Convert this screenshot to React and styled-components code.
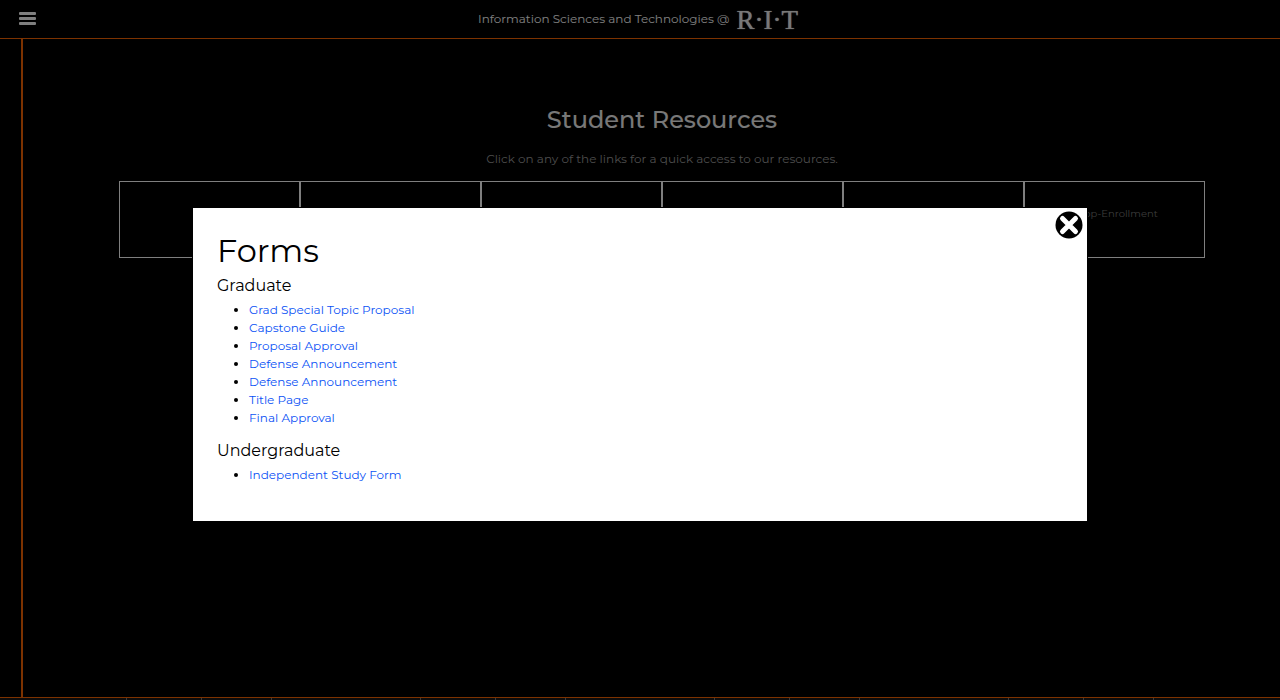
import React from "react";
import styled, { createGlobalStyle } from "styled-components";

const GlobalStyle = createGlobalStyle`
  *, *::before, *::after { box-sizing: border-box; }
  body {
    margin: 0;
    background: #000;
    color: #fff;
    font-family: Montserrat, Inter, "Liberation Sans", sans-serif;
    font-size: 12px;
    line-height: 18px;
  }
`;

const accent = "#fa6400";

const Page = styled.div`
  min-height: 100vh;
  display: flex;
  flex-direction: column;
`;

const Header = styled.header`
  display: grid;
  grid-template-columns: 1fr auto 1fr;
  align-items: center;
  height: 39px;
  padding: 0 23px 0 19px;
  border-bottom: 1px solid ${accent};
`;

const MenuButton = styled.button`
  justify-self: start;
  display: flex;
  padding: 0;
  border: 0;
  background: none;
  color: #fff;
`;

const Brand = styled.a`
  display: flex;
  align-items: center;
  gap: 7px;
  color: #fff;
  text-decoration: none;
`;

const Logo = styled.span`
  padding-top: 2px;
  font-family: "Liberation Serif", serif;
  font-size: 27px;
  line-height: 36px;
  color: #f0f0f0;
  text-shadow: 0 0 1px #fff;
`;

const Body = styled.div`
  flex: 1;
  display: flex;
  border-bottom: 1px solid ${accent};
`;

const Rail = styled.div`
  width: 23px;
  border-right: 2px solid ${accent};
`;

const Main = styled.main`
  flex: 1;
  padding: 65px 75px 64px 96px;
  text-align: center;
`;

const Title = styled.h1`
  margin: 0 0 14px;
  font-size: 24px;
  font-weight: 500;
  line-height: 32px;
  color: #f0f0f0;
`;

const Intro = styled.p`
  margin: 0 0 13px;
  color: #999;
`;

const Resources = styled.div`
  display: grid;
  grid-template-columns: repeat(6, 1fr);
`;

const Resource = styled.button`
  height: 77px;
  padding: 0 0 12px;
  border: 1px solid #fff;
  background: #000;
  color: #777;
  font: inherit;
  font-size: 10px;
`;

const FooterEdge = styled.footer`
  height: 2px;
  background: repeating-linear-gradient(
    90deg,
    #181818 0 126px, #777 126px 127px,
    #181818 127px 201px, #777 201px 202px,
    #181818 202px 271px, #777 271px 272px,
    #181818 272px 294px
  );
`;

const Overlay = styled.div`
  position: fixed;
  inset: 0;
  display: flex;
  align-items: flex-start;
  justify-content: center;
  padding-top: 207px;
  background: rgba(0, 0, 0, 0.5);
`;

const Dialog = styled.section`
  position: relative;
  width: 70%;
  padding: 23px 24px 25px;
  border: 1px solid #000;
  background: #fff;
  color: #000;
`;

const CloseButton = styled.button`
  position: absolute;
  top: 3px;
  right: 4px;
  display: flex;
  padding: 0;
  border: 0;
  background: none;
`;

const DialogTitle = styled.h2`
  margin: 0 0 3px;
  font-size: 32px;
  font-weight: 400;
  line-height: 40px;
`;

const GroupTitle = styled.h3`
  margin: 0 0 3px;
  font-size: 16px;
  font-weight: 400;
  line-height: 24px;
`;

const FormList = styled.ul`
  margin: 0 0 12px;
  padding-left: 32px;
`;

const FormLink = styled.a`
  color: #0a52f5;
  text-decoration: none;
`;

const resources = [
  "Academic Advisors",
  "Co-Op & Careers",
  "Forms",
  "Study Abroad",
  "Tutors & Labs",
  "Coop-Enrollment",
];

const groups = [
  {
    title: "Graduate",
    forms: [
      "Grad Special Topic Proposal",
      "Capstone Guide",
      "Proposal Approval",
      "Defense Announcement",
      "Defense Announcement",
      "Title Page",
      "Final Approval",
    ],
  },
  { title: "Undergraduate", forms: ["Independent Study Form"] },
];

export default function App() {
  return (
    <>
      <GlobalStyle />
      <Page>
        <Header>
          <MenuButton aria-label="Menu">
            <svg width="17" height="14" viewBox="0 0 17 14" fill="currentColor">
              <rect y="0" width="17" height="3" rx="1" />
              <rect y="5" width="17" height="3" rx="1" />
              <rect y="10" width="17" height="3" rx="1" />
            </svg>
          </MenuButton>
          <Brand href="#">
            Information Sciences and Technologies @ <Logo>R·I·T</Logo>
          </Brand>
        </Header>
        <Body>
          <Rail />
          <Main>
            <Title>Student Resources</Title>
            <Intro>Click on any of the links for a quick access to our resources.</Intro>
            <Resources>
              {resources.map((name, i) => (
                <Resource key={name} aria-label={name}>
                  {i === resources.length - 1 ? name : ""}
                </Resource>
              ))}
            </Resources>
          </Main>
        </Body>
        <FooterEdge />
      </Page>
      <Overlay>
        <Dialog role="dialog" aria-labelledby="forms-title">
          <CloseButton aria-label="Close">
            <svg width="28" height="28" viewBox="0 0 28 28">
              <circle cx="14" cy="14" r="13.5" fill="#000" />
              <path d="M7.5 7.5l13 13M20.5 7.5l-13 13" stroke="#fff" strokeWidth="5" strokeLinecap="round" />
            </svg>
          </CloseButton>
          <DialogTitle id="forms-title">Forms</DialogTitle>
          {groups.map((group) => (
            <React.Fragment key={group.title}>
              <GroupTitle>{group.title}</GroupTitle>
              <FormList>
                {group.forms.map((form, i) => (
                  <li key={i}>
                    <FormLink href="#">{form}</FormLink>
                  </li>
                ))}
              </FormList>
            </React.Fragment>
          ))}
        </Dialog>
      </Overlay>
    </>
  );
}
